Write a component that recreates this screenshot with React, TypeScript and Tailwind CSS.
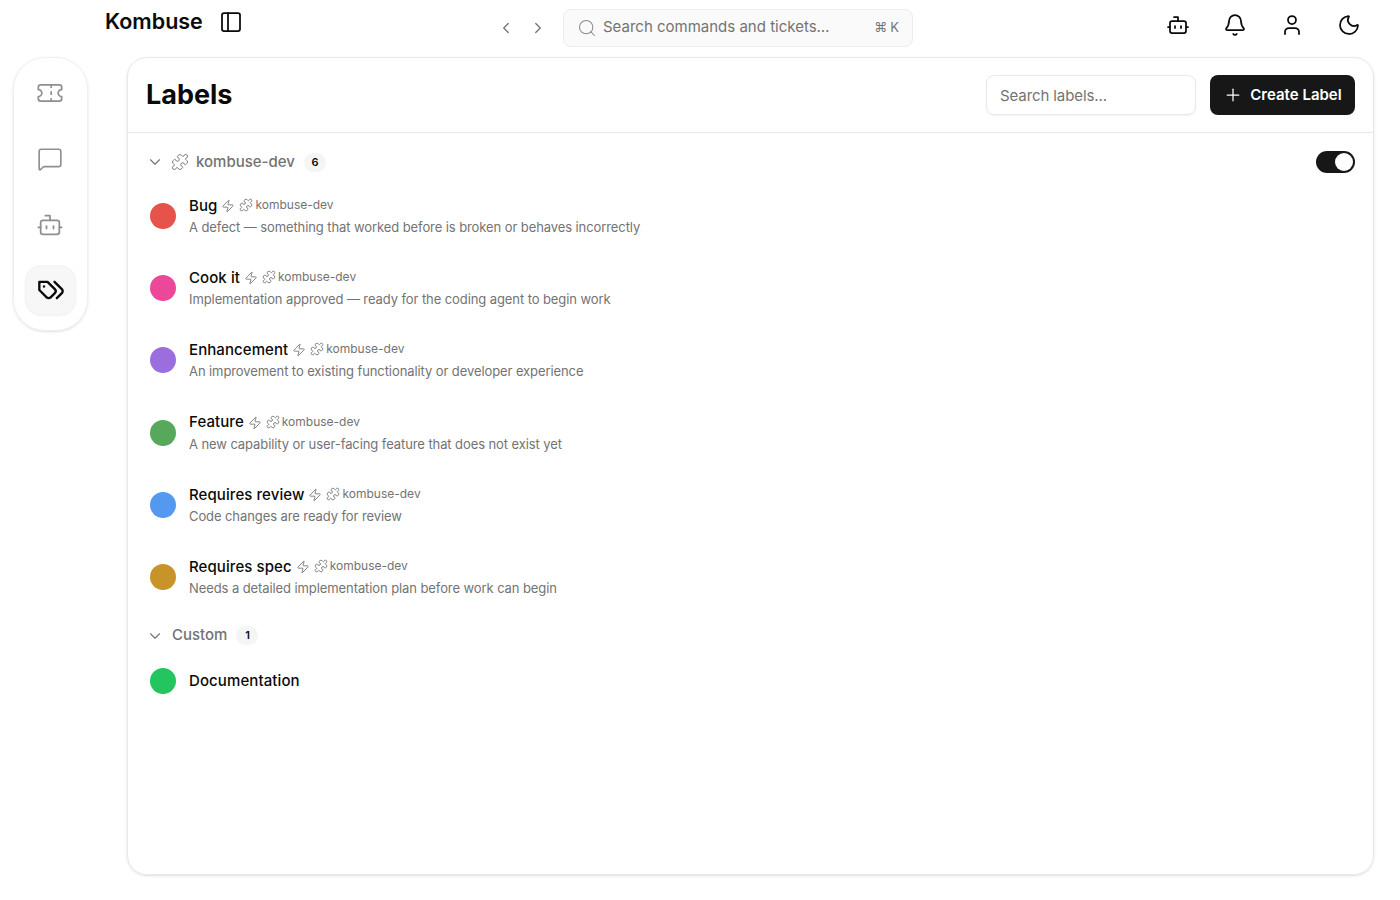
import React from 'react';
import {
  Bell, Bot, ChevronDown, ChevronLeft, ChevronRight, MessageSquare, Moon,
  PanelLeft, Plus, Puzzle, Search, Ticket, User, Zap,
} from 'lucide-react';

const labels = [
  { name: 'Bug', color: 'bg-[#e5534b]', desc: 'A defect — something that worked before is broken or behaves incorrectly' },
  { name: 'Cook it', color: 'bg-[#ec4899]', desc: 'Implementation approved — ready for the coding agent to begin work' },
  { name: 'Enhancement', color: 'bg-[#9b6ee0]', desc: 'An improvement to existing functionality or developer experience' },
  { name: 'Feature', color: 'bg-[#57a85a]', desc: 'A new capability or user-facing feature that does not exist yet' },
  { name: 'Requires review', color: 'bg-[#5499f0]', desc: 'Code changes are ready for review' },
  { name: 'Requires spec', color: 'bg-[#c89328]', desc: 'Needs a detailed implementation plan before work can begin' },
];

// older lucide "tags" drawing, the package's current one looks different
function TagsIcon() {
  return (
    <svg width="28" height="28" viewBox="0 0 24 24" fill="none" stroke="currentColor" strokeWidth="2" strokeLinecap="round" strokeLinejoin="round">
      <path d="M9 5H2v7l6.29 6.29c.94.94 2.48.94 3.42 0l3.58-3.58c.94-.94.94-2.48 0-3.42L9 5Z" />
      <path d="M6 9.01V9" />
      <path d="m15 5 6.3 6.3a2.4 2.4 0 0 1 0 3.4L17 19" />
    </svg>
  );
}

function LabelRow({ name, color, desc }: { name: string; color: string; desc: string }) {
  return (
    <div className="flex h-[72.25px] items-center pl-[22px]">
      <div className={`h-[26px] w-[26px] shrink-0 rounded-full ${color}`} />
      <div className="ml-[13px]">
        <div className="flex h-[22px] items-center">
          <span className="translate-y-px text-[15px] font-medium tracking-[0.08px] text-[#0a0a0a]">{name}</span>
          <Zap className="ml-[4px] h-[14px] w-[14px] translate-y-px text-[#737373]" strokeWidth={1.5} />
          <Puzzle className="ml-[4px] h-[14px] w-[14px] text-[#737373]" strokeWidth={1.5} />
          <span className="ml-[2px] text-xs text-[#737373]">kombuse-dev</span>
        </div>
        <p className="text-[13px] leading-[22px] tracking-[-0.09px] text-[#737373]">{desc}</p>
      </div>
    </div>
  );
}

function Badge({ n }: { n: number }) {
  return (
    <span className="ml-[9px] flex h-[19px] w-[22px] items-center justify-center rounded-full bg-[#f5f5f5] text-[11px] font-semibold text-[#0a0a0a]">
      {n}
    </span>
  );
}

export default function App() {
  return (
    <div className="flex h-[900px] flex-col bg-white font-['Inter',sans-serif] text-[#0a0a0a]">
      <header className="flex h-[57px] shrink-0">
        <div className="flex h-[44px] items-center pl-[105px]">
          <span className="w-[97px] text-[21.5px] font-semibold leading-none">Kombuse</span>
          <PanelLeft className="ml-[17px] h-6 w-6" strokeWidth={1.75} />
        </div>
        <div className="ml-[254px] flex h-[55px] items-center">
          <ChevronLeft className="h-[18px] w-[18px] text-[#737373]" strokeWidth={1.75} />
          <ChevronRight className="ml-[14px] h-[18px] w-[18px] text-[#737373]" strokeWidth={1.75} />
          <div className="ml-[16px] flex h-[38px] w-[350px] items-center rounded-lg border border-[#ececec] bg-[#fafafa] pl-[13px] pr-[13px]">
            <Search className="h-5 w-5 text-[#8a8a8a]" strokeWidth={1.25} />
            <span className="ml-[6px] text-[15px] text-[#737373]">Search commands and tickets…</span>
            <span className="ml-auto flex items-center gap-[3px] text-[13px] text-[#737373]">
              <span>⌘</span>
              <span>K</span>
            </span>
          </div>
        </div>
        <div className="ml-[253px] flex h-[50px] items-center gap-[33px]">
          <Bot className="h-6 w-6" strokeWidth={1.75} />
          <Bell className="h-6 w-6" strokeWidth={1.75} />
          <User className="h-6 w-6" strokeWidth={1.75} />
          <Moon className="h-6 w-6" strokeWidth={1.75} />
        </div>
      </header>

      <div className="flex items-start pl-[13px]">
        <aside className="flex h-[274px] w-[75px] shrink-0 flex-col items-center rounded-[32px] border border-[#efefef] pt-[2px] shadow-sm">
          <div className="flex h-[66px] w-full items-center justify-center pr-px">
            <Ticket className="h-7 w-7 text-[#8f8f8f]" strokeWidth={1.5} />
          </div>
          <div className="flex h-[66px] w-full items-center justify-center pr-px">
            <MessageSquare className="h-[26px] w-[26px] text-[#8f8f8f]" strokeWidth={1.5} />
          </div>
          <div className="flex h-[66px] w-full items-center justify-center pr-px">
            <Bot className="h-7 w-7 text-[#8f8f8f]" strokeWidth={1.5} />
          </div>
          <div className="mt-[7px] flex h-[50px] w-[51px] items-center justify-center rounded-2xl border border-[#f3f3f3] bg-[#f7f7f7] shadow-xs">
            <TagsIcon />
          </div>
        </aside>

        <main className="ml-[39px] h-[818px] w-[1247px] rounded-[20px] border border-[#e8e8e8] shadow-sm">
          <div className="flex h-[75px] items-center border-b border-[#e8e8e8] pl-[18px] pr-[18px]">
            <h1 className="pb-[2px] text-[27px] font-bold leading-none text-[#0a0a0a]">Labels</h1>
            <div className="ml-auto flex h-10 w-[210px] items-center rounded-lg border border-[#e8e8e8] pl-[13px] pt-[2px] text-[15px] tracking-[-0.1px] text-[#737373] shadow-xs">
              Search labels...
            </div>
            <button className="ml-[14px] flex h-10 w-[145px] items-center justify-center gap-[7px] rounded-lg bg-[#171717] text-[15px] font-semibold text-white">
              <Plus className="h-5 w-5" strokeWidth={1.5} />
              Create Label
            </button>
          </div>

          <div className="flex h-[58px] items-center pl-[18px] pr-[18px]">
            <ChevronDown className="h-[18px] w-[18px] text-[#737373]" strokeWidth={1.5} />
            <Puzzle className="ml-[7px] h-[18px] w-[18px] text-[#737373]" strokeWidth={1.25} />
            <span className="ml-[7px] text-[15px] font-medium text-[#737373]">kombuse-dev</span>
            <Badge n={6} />
            <div className="ml-auto flex h-[22px] w-[39px] items-center justify-end rounded-full bg-[#171717] pr-[2px]">
              <div className="h-[18px] w-[18px] rounded-full bg-white" />
            </div>
          </div>

          <div className="-mt-[11.3px]">
            {labels.map(l => <LabelRow key={l.name} {...l} />)}
          </div>

          <div className="mt-[7.3px] flex h-[30px] items-center pl-[18px]">
            <ChevronDown className="h-[18px] w-[18px] text-[#737373]" strokeWidth={1.5} />
            <span className="ml-[8px] text-[15px] font-medium text-[#737373]">Custom</span>
            <Badge n={1} />
          </div>

          <div className="mt-[15.5px] flex h-[30px] items-center pl-[22px]">
            <div className="h-[26px] w-[26px] rounded-full bg-[#22c55e]" />
            <span className="ml-[13px] text-[15px] font-medium tracking-[0.1px]">Documentation</span>
          </div>
        </main>
      </div>
    </div>
  );
}
